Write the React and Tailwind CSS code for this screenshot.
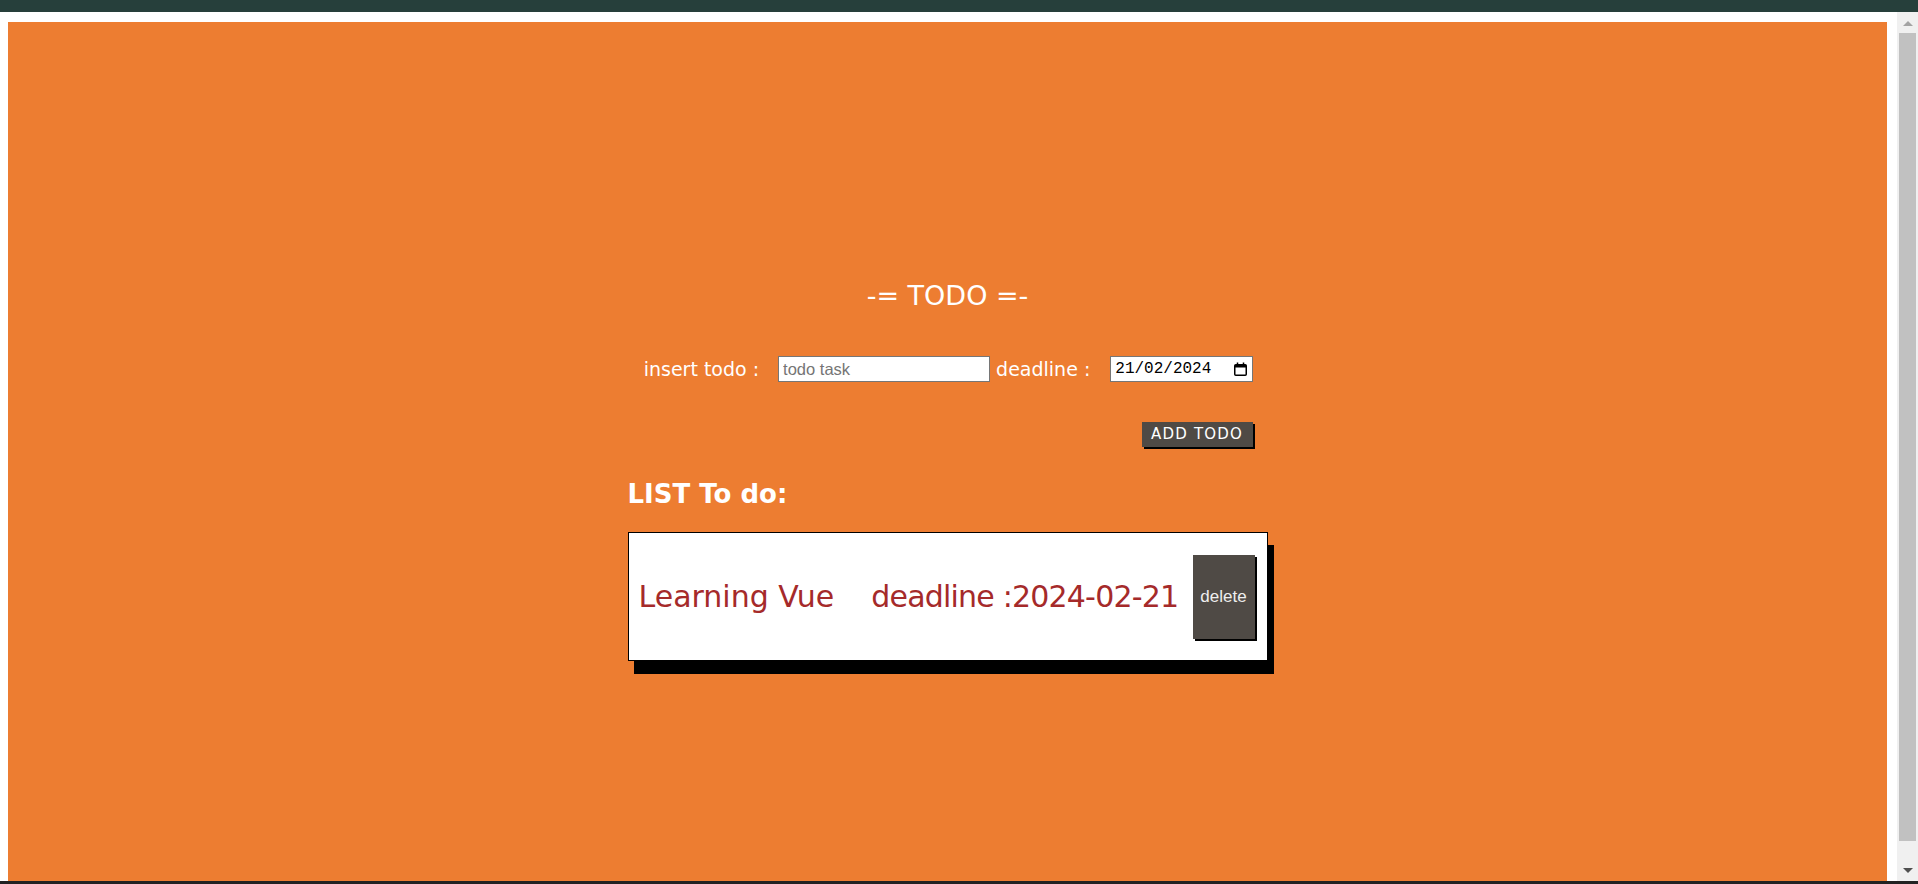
import { useState } from 'react';

const TODOS = [{ title: 'Learning Vue', deadline: '2024-02-21' }];

function CalendarIcon() {
  return (
    <svg width="13" height="14" viewBox="0 0 13 14" className="shrink-0">
      <rect x="0.75" y="2.75" width="11.5" height="10.5" rx="1" fill="none" stroke="#000" strokeWidth="1.5" />
      <rect x="1" y="3" width="11" height="2.5" fill="#000" />
      <rect x="2.75" y="0.5" width="1.5" height="3" fill="#000" />
      <rect x="8.75" y="0.5" width="1.5" height="3" fill="#000" />
    </svg>
  );
}

function Scrollbar() {
  return (
    <div className="w-[21px] bg-[#f0f0f0] flex flex-col shrink-0">
      <div className="h-[21px] flex items-center justify-center">
        <div className="w-0 h-0 border-l-[5px] border-r-[5px] border-b-[5px] border-l-transparent border-r-transparent border-b-[#a3a3a3] mt-[2px]" />
      </div>
      <div className="h-[808px] mx-[2px] bg-[#c1c1c1]" />
      <div className="flex-1" />
      <div className="h-[21px] flex items-center justify-center">
        <div className="w-0 h-0 border-l-[5px] border-r-[5px] border-t-[5px] border-l-transparent border-r-transparent border-t-[#505050]" />
      </div>
    </div>
  );
}

export default function App() {
  const [task, setTask] = useState('');
  const [todos] = useState(TODOS);

  return (
    <div className="h-[884px] flex flex-col bg-white overflow-hidden">
      <div className="h-[12px] bg-[#263f3b]" />
      <div className="flex flex-1">
        <div className="flex-1 pt-[10px] pl-[8px] pr-[10px]">
          <div className="h-[859px] bg-[#ed7d31] flex flex-col items-center pt-[258px] font-['DejaVu_Sans',sans-serif]">
            <div className="w-[640px]">
              <h1 className="text-center text-[27px] leading-[32px] text-white">-= TODO =-</h1>

              <div className="mt-[44px] h-[26px] flex items-center justify-center pl-[2px]">
                <label className="text-[19px] text-white mr-[19px]">insert todo :</label>
                <input
                  type="text"
                  value={task}
                  onChange={(e) => setTask(e.target.value)}
                  placeholder="todo task"
                  className="w-[212px] h-[26px] px-[4px] mr-[6px] bg-white border border-[#767676] font-['Liberation_Sans',sans-serif] text-[16.5px] text-black placeholder:text-[#757575] outline-none"
                />
                <label className="text-[19px] text-white mr-[20px]">deadline :</label>
                <div className="w-[143px] h-[26px] pl-[4px] pr-[5px] bg-white border border-[#767676] flex items-center justify-between">
                  <span className="font-['Liberation_Mono',monospace] text-[16px] text-black">21/02/2024</span>
                  <CalendarIcon />
                </div>
              </div>

              <div className="mt-[40px] flex justify-end pr-[15px]">
                <button className="w-[111px] h-[25px] bg-[#4f4a45] text-white text-[15px] tracking-[1.2px] shadow-[2px_2px_0_#000]">
                  ADD TODO
                </button>
              </div>

              <h2 className="mt-[32px] text-[26px] leading-[30px] font-bold text-white">LIST To do:</h2>

              <div className="mt-[23px] space-y-4">
                {todos.map((todo, i) => (
                  <div
                    key={i}
                    className="h-[129px] bg-white border border-black shadow-[6px_13px_0_#000] flex items-center pl-[10px] pr-[12px] text-[#a52a2a] text-[30px]"
                  >
                    <span>{todo.title}</span>
                    <span className="ml-[37px] tracking-[-0.8px]">deadline :{todo.deadline}</span>
                    <button className="ml-auto w-[62px] h-[84px] bg-[#4f4a45] text-[#eeeeee] text-[17px] font-['Liberation_Sans',sans-serif] shadow-[2px_2px_0_#000]">
                      delete
                    </button>
                  </div>
                ))}
              </div>
            </div>
          </div>
        </div>
        <Scrollbar />
      </div>
      <div className="h-[3px] bg-[#222222]" />
    </div>
  );
}
